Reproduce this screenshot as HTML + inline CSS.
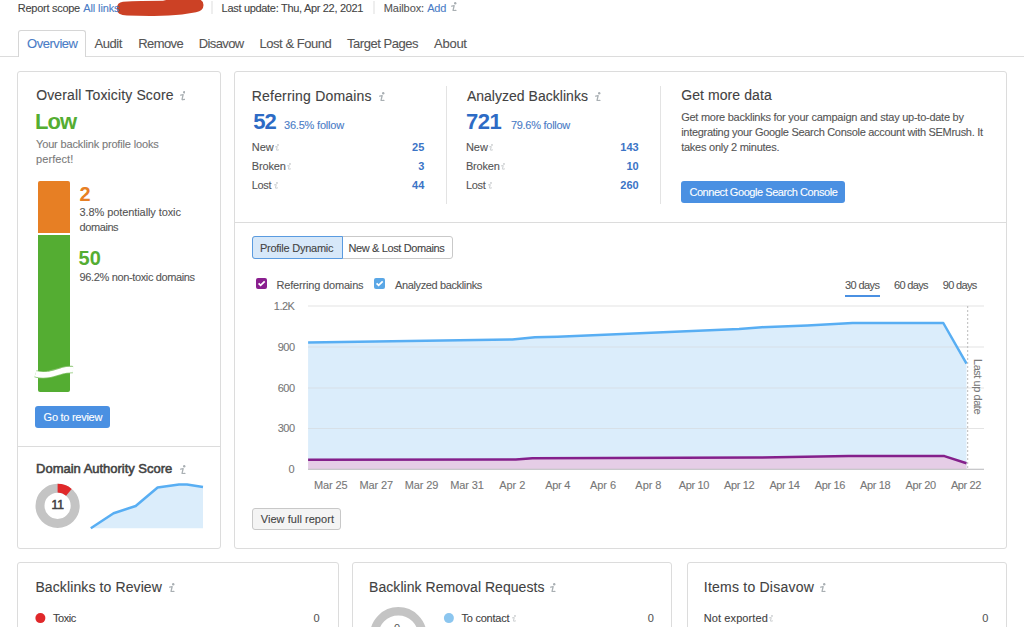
<!DOCTYPE html>
<html><head><meta charset="utf-8">
<style>
html,body{margin:0;padding:0;background:#fff;width:1024px;height:627px;overflow:hidden;position:relative;font-family:"Liberation Sans",sans-serif;}
.t{position:absolute;white-space:nowrap;}
.r{-webkit-text-stroke:0.1px currentColor;}
.a{position:absolute;box-sizing:border-box;}
.card{position:absolute;box-sizing:border-box;border:1px solid #dcdcdc;border-radius:3px;background:#fff;}
.ii{position:absolute;font-family:"Liberation Serif",serif;font-style:italic;color:#b4b8bb;font-size:13px;line-height:13px;}
.ln{position:absolute;background:#e3e3e3;}
</style></head><body>
<!-- top bar -->
<svg class="a" style="left:0;top:0" width="1024" height="70">
<path d="M123 1.8 Q140 0.9 163 0.8 L170 -1 L197 -1 Q203.5 -0.5 203.5 5 Q203.5 10.8 196 12.2 L182 14.6 Q168 16.2 150 16 L127 15.6 Q116.8 15 116.8 9 Q116.8 2.4 123 1.8 Z" fill="#cc4125"/>
<rect x="211.5" y="1" width="1" height="13" fill="#dedede"/>
<rect x="373.5" y="1" width="1" height="13" fill="#dedede"/>
</svg>
<!-- tabs -->
<div class="ln" style="left:0;top:56px;width:1024px;height:1px;background:#dcdcdc"></div>
<div class="a" style="left:18px;top:30px;width:68px;height:27px;border:1px solid #d6d6d6;border-bottom:none;border-radius:3px 3px 0 0;background:#fff"></div>

<!-- card 1 -->
<div class="card" style="left:17px;top:71px;width:204px;height:478px"></div>
<div class="a" style="left:38px;top:181px;width:32px;height:52px;background:#e77f24;border-radius:2px 2px 0 0"></div>
<div class="a" style="left:38px;top:235px;width:32px;height:157px;background:#54ad32;border-radius:0 0 2px 2px"></div>
<svg class="a" style="left:30px;top:360px" width="50" height="24">
<path d="M5.5 13.8 Q12 15.8 20 14.2 Q28 12.2 32 10.8 Q37 9.4 43 9.6" fill="none" stroke="#86c46c" stroke-width="7.4"/>
<path d="M5.5 13.8 Q12 15.8 20 14.2 Q28 12.2 32 10.8 Q37 9.4 43 9.6" fill="none" stroke="#fff" stroke-width="5.6"/>
</svg>
<div class="a" style="left:35px;top:406px;width:75px;height:22px;background:#4a90e2;border-radius:3px"></div>
<div class="ln" style="left:18px;top:446px;width:202px;height:1px;background:#dcdcdc"></div>
<svg class="a" style="left:0;top:440px" width="220" height="100">
<circle cx="57.6" cy="65.8" r="17.6" fill="none" stroke="#c4c4c4" stroke-width="9"/>
<path d="M57.6 43.8 A22 22 0 0 1 71.7 48.9 L66.1 55.7 A13.2 13.2 0 0 0 57.6 52.6 Z" fill="#e0282a"/>
<path d="M90.8 88.3 L113.6 73.2 L135.7 66 L157.6 47.5 L179 44.5 L187 44.5 L203 47 L203 88.3 Z" fill="#dbedfb"/>
<path d="M90.8 88.3 L113.6 73.2 L135.7 66 L157.6 47.5 L179 44.5 L187 44.5 L203 47" fill="none" stroke="#58aef3" stroke-width="2.5" stroke-linejoin="round"/>
</svg>

<!-- card 2 -->
<div class="card" style="left:234px;top:71px;width:773px;height:478px"></div>
<div class="ln" style="left:446px;top:86px;width:1px;height:118px"></div>
<div class="ln" style="left:660px;top:86px;width:1px;height:118px"></div>
<div class="ln" style="left:235px;top:222px;width:771px;height:1px;background:#dcdcdc"></div>
<div class="a" style="left:681px;top:181px;width:164px;height:22px;background:#4a90e2;border-radius:3px"></div>
<!-- segmented -->
<div class="a" style="left:252px;top:236px;width:201px;height:23px;border:1px solid #c9c9c9;border-radius:3px;background:#fff"></div>
<div class="a" style="left:252px;top:236px;width:91px;height:23px;border:1px solid #5a9be0;border-radius:3px 0 0 3px;background:#d7e8f9"></div>
<!-- checkboxes -->
<svg class="a" style="left:250px;top:272px" width="150" height="22">
<rect x="6" y="6" width="11" height="11" rx="2" fill="#8a1f8f"/>
<path d="M8.6 11.4 L10.6 13.3 L14.7 9.4" fill="none" stroke="#fff" stroke-width="1.8"/>
<rect x="124" y="6" width="11" height="11" rx="2" fill="#5aa7e6"/>
<path d="M126.6 11.4 L128.6 13.3 L132.7 9.4" fill="none" stroke="#fff" stroke-width="1.8"/>
</svg>
<div class="a" style="left:845px;top:295px;width:35px;height:2px;background:#4a90e2"></div>
<!-- chart -->
<svg class="a" style="left:0;top:0" width="1024" height="627">
<g fill="#e4e4e4">
<rect x="308" y="305.5" width="676" height="1"/>
<rect x="308" y="346.5" width="676" height="1"/>
<rect x="308" y="387.5" width="676" height="1"/>
<rect x="308" y="428" width="676" height="1"/>
</g>
<path d="M308.1 342.4 L512.3 339.5 L535 337.2 L557.6 336.7 L739.1 329.1 L761.8 327.2 L807.2 325.6 L852.5 323.1 L943.3 323 L966.5 363.7 L966.5 469 L308.1 469 Z" fill="#dbedfb"/>
<path d="M308.1 459.7 L515.8 459.5 L532.4 458.3 L756.5 457.5 L848.7 456.1 L944.4 456.1 L966.5 463.2 L966.5 469 L308.1 469 Z" fill="#e5cde6"/>
<g fill="#d4d4d4">
<rect x="308" y="346.5" width="659" height="1" opacity=".5"/>
<rect x="308" y="387.5" width="659" height="1" opacity=".5"/>
<rect x="308" y="428" width="659" height="1" opacity=".5"/>
</g>
<path d="M308.1 342.4 L512.3 339.5 L535 337.2 L557.6 336.7 L739.1 329.1 L761.8 327.2 L807.2 325.6 L852.5 323.1 L943.3 323 L966.5 363.7" fill="none" stroke="#58aef3" stroke-width="2.5" stroke-linejoin="round"/>
<path d="M308.1 459.7 L515.8 459.5 L532.4 458.3 L756.5 457.5 L848.7 456.1 L944.4 456.1 L966.5 463.2" fill="none" stroke="#84208b" stroke-width="2.5" stroke-linejoin="round"/>
<rect x="308" y="468.7" width="676" height="1.2" fill="#c2c2c6"/>
<line x1="967.7" y1="306" x2="967.7" y2="469" stroke="#bbb" stroke-width="1" stroke-dasharray="2,2"/>
</svg>
<div class="a" style="left:252px;top:508px;width:89px;height:22px;border:1px solid #c8c8c8;border-radius:3px;background:#f4f4f4"></div>

<!-- bottom cards -->
<div class="card" style="left:17px;top:562px;width:322px;height:80px"></div>
<div class="card" style="left:352px;top:562px;width:320px;height:80px"></div>
<div class="card" style="left:687px;top:562px;width:320px;height:80px"></div>
<svg class="a" style="left:0;top:560px" width="1024" height="67">
<circle cx="40.4" cy="58.1" r="5" fill="#e0282a"/>
<circle cx="448.9" cy="58.1" r="5" fill="#8cc6ef"/>
<circle cx="398.3" cy="75.4" r="24.1" fill="none" stroke="#c4c4c4" stroke-width="8.4"/>
</svg>
<div class="t" style="left:394px;top:623px;font-size:11px;line-height:11px;color:#555;">0</div>
<div class="t r" id="t0" style="left:17.8px;top:2.7px;font-size:11px;line-height:11px;color:#444;letter-spacing:-0.273px;">Report scope</div>
<div class="t r" id="t1" style="left:83.3px;top:2.7px;font-size:11px;line-height:11px;color:#4a7cc6;letter-spacing:-0.125px;">All links</div>
<div class="t r" id="t2" style="left:221.6px;top:2.7px;font-size:11px;line-height:11px;color:#444;letter-spacing:-0.310px;">Last update: Thu, Apr 22, 2021</div>
<div class="t r" id="t3" style="left:383.8px;top:2.7px;font-size:11px;line-height:11px;color:#555;letter-spacing:-0.086px;">Mailbox:</div>
<div class="t r" id="t4" style="left:427.2px;top:2.7px;font-size:11px;line-height:11px;color:#4a7cc6;letter-spacing:-0.200px;">Add</div>
<div class="t r" id="t5" style="left:27.0px;top:36.5px;font-size:13px;line-height:13px;color:#4a7cc6;letter-spacing:-0.457px;">Overview</div>
<div class="t r" id="t6" style="left:94.6px;top:36.5px;font-size:13px;line-height:13px;color:#555;letter-spacing:-0.450px;">Audit</div>
<div class="t r" id="t7" style="left:138.3px;top:36.5px;font-size:13px;line-height:13px;color:#555;letter-spacing:-0.600px;">Remove</div>
<div class="t r" id="t8" style="left:198.7px;top:36.5px;font-size:13px;line-height:13px;color:#555;letter-spacing:-0.600px;">Disavow</div>
<div class="t r" id="t9" style="left:259.5px;top:36.5px;font-size:13px;line-height:13px;color:#555;letter-spacing:-0.455px;">Lost &amp; Found</div>
<div class="t r" id="t10" style="left:347.0px;top:36.5px;font-size:13px;line-height:13px;color:#555;letter-spacing:-0.455px;">Target Pages</div>
<div class="t r" id="t11" style="left:434.0px;top:36.5px;font-size:13px;line-height:13px;color:#555;letter-spacing:-0.250px;">About</div>
<div class="t r" id="t12" style="left:36.2px;top:88.2px;font-size:14px;line-height:14px;color:#424242;letter-spacing:0.143px;">Overall Toxicity Score</div>
<div class="t" id="t13" style="left:35.0px;top:110.9px;font-size:22px;line-height:22px;color:#54ad32;font-weight:700;letter-spacing:-1.000px;">Low</div>
<div class="t r" id="t14" style="left:36.0px;top:139.2px;font-size:11px;line-height:11px;color:#7a7a7a;letter-spacing:-0.154px;">Your backlink profile looks</div>
<div class="t r" id="t15" style="left:36.0px;top:153.8px;font-size:11px;line-height:11px;color:#7a7a7a;letter-spacing:0.086px;">perfect!</div>
<div class="t" id="t16" style="left:79.6px;top:183.6px;font-size:20px;line-height:20px;color:#e77f24;font-weight:700;">2</div>
<div class="t r" id="t17" style="left:79.6px;top:206.9px;font-size:11px;line-height:11px;color:#555;letter-spacing:-0.095px;">3.8% potentially toxic</div>
<div class="t r" id="t18" style="left:79.6px;top:222.2px;font-size:11px;line-height:11px;color:#555;letter-spacing:-0.433px;">domains</div>
<div class="t" id="t19" style="left:78.6px;top:248.4px;font-size:20px;line-height:20px;color:#54ad32;font-weight:700;">50</div>
<div class="t r" id="t20" style="left:79.6px;top:271.7px;font-size:11px;line-height:11px;color:#555;letter-spacing:-0.364px;">96.2% non-toxic domains</div>
<div class="t r" id="t21" style="left:43.6px;top:412.3px;font-size:11px;line-height:11px;color:#fff;letter-spacing:-0.273px;">Go to review</div>
<div class="t" id="t22" style="left:36.1px;top:462.2px;font-size:13px;line-height:13px;color:#424242;-webkit-text-stroke:0.55px currentColor;letter-spacing:-0.019px;">Domain Authority Score</div>
<div class="t" id="t23" style="left:-142.4px;width:400px;text-align:center;top:499.3px;font-size:12px;line-height:12px;color:#424242;-webkit-text-stroke:0.55px currentColor;">11</div>
<div class="t r" id="t24" style="left:251.8px;top:88.5px;font-size:14px;line-height:14px;color:#424242;letter-spacing:0.188px;">Referring Domains</div>
<div class="t" id="t25" style="left:253.3px;top:110.6px;font-size:22px;line-height:22px;color:#2d6bc5;font-weight:700;letter-spacing:-1.000px;">52</div>
<div class="t r" id="t26" style="left:284.0px;top:119.8px;font-size:11px;line-height:11px;color:#4a7cc6;letter-spacing:-0.200px;">36.5% follow</div>
<div class="t r" id="t27" style="left:251.8px;top:141.7px;font-size:11px;line-height:11px;color:#555;">New</div>
<div class="t r" id="t28" style="left:251.8px;top:160.8px;font-size:11px;line-height:11px;color:#555;letter-spacing:-0.160px;">Broken</div>
<div class="t r" id="t29" style="left:251.8px;top:180.0px;font-size:11px;line-height:11px;color:#555;letter-spacing:-0.333px;">Lost</div>
<div class="t" id="t30" style="left:24.3px;width:400px;text-align:right;top:141.7px;font-size:11px;line-height:11px;color:#3b74c6;font-weight:700;">25</div>
<div class="t" id="t31" style="left:24.3px;width:400px;text-align:right;top:160.8px;font-size:11px;line-height:11px;color:#3b74c6;font-weight:700;">3</div>
<div class="t" id="t32" style="left:24.3px;width:400px;text-align:right;top:180.0px;font-size:11px;line-height:11px;color:#3b74c6;font-weight:700;">44</div>
<div class="t r" id="t33" style="left:466.9px;top:88.5px;font-size:14px;line-height:14px;color:#424242;letter-spacing:0.024px;">Analyzed Backlinks</div>
<div class="t" id="t34" style="left:466.0px;top:110.6px;font-size:22px;line-height:22px;color:#2d6bc5;font-weight:700;letter-spacing:-0.500px;">721</div>
<div class="t r" id="t35" style="left:510.9px;top:119.8px;font-size:11px;line-height:11px;color:#4a7cc6;letter-spacing:-0.273px;">79.6% follow</div>
<div class="t r" id="t36" style="left:465.9px;top:141.7px;font-size:11px;line-height:11px;color:#555;">New</div>
<div class="t r" id="t37" style="left:465.9px;top:160.8px;font-size:11px;line-height:11px;color:#555;letter-spacing:-0.160px;">Broken</div>
<div class="t r" id="t38" style="left:465.9px;top:180.0px;font-size:11px;line-height:11px;color:#555;letter-spacing:-0.333px;">Lost</div>
<div class="t" id="t39" style="left:238.7px;width:400px;text-align:right;top:141.7px;font-size:11px;line-height:11px;color:#3b74c6;font-weight:700;">143</div>
<div class="t" id="t40" style="left:238.7px;width:400px;text-align:right;top:160.8px;font-size:11px;line-height:11px;color:#3b74c6;font-weight:700;">10</div>
<div class="t" id="t41" style="left:238.7px;width:400px;text-align:right;top:180.0px;font-size:11px;line-height:11px;color:#3b74c6;font-weight:700;">260</div>
<div class="t r" id="t42" style="left:681.2px;top:88.4px;font-size:14px;line-height:14px;color:#424242;letter-spacing:0.083px;">Get more data</div>
<div class="t r" id="t43" style="left:681.2px;top:111.8px;font-size:11px;line-height:11px;color:#555;letter-spacing:-0.259px;">Get more backlinks for your campaign and stay up-to-date by</div>
<div class="t r" id="t44" style="left:681.2px;top:127.3px;font-size:11px;line-height:11px;color:#555;letter-spacing:-0.300px;">integrating your Google Search Console account with SEMrush. It</div>
<div class="t r" id="t45" style="left:681.2px;top:141.9px;font-size:11px;line-height:11px;color:#555;letter-spacing:-0.250px;">takes only 2 minutes.</div>
<div class="t r" id="t46" style="left:689.4px;top:187.0px;font-size:11px;line-height:11px;color:#fff;letter-spacing:-0.443px;">Connect Google Search Console</div>
<div class="t r" id="t47" style="left:259.9px;top:242.5px;font-size:11px;line-height:11px;color:#444;letter-spacing:-0.243px;">Profile Dynamic</div>
<div class="t r" id="t48" style="left:348.5px;top:242.5px;font-size:11px;line-height:11px;color:#444;letter-spacing:-0.376px;">New &amp; Lost Domains</div>
<div class="t r" id="t49" style="left:276.5px;top:279.6px;font-size:11px;line-height:11px;color:#555;letter-spacing:-0.175px;">Referring domains</div>
<div class="t r" id="t50" style="left:395.1px;top:279.6px;font-size:11px;line-height:11px;color:#555;letter-spacing:-0.376px;">Analyzed backlinks</div>
<div class="t r" id="t51" style="left:845.0px;top:279.6px;font-size:11px;line-height:11px;color:#555;letter-spacing:-0.600px;">30 days</div>
<div class="t r" id="t52" style="left:894.0px;top:279.6px;font-size:11px;line-height:11px;color:#555;letter-spacing:-0.667px;">60 days</div>
<div class="t r" id="t53" style="left:942.8px;top:279.6px;font-size:11px;line-height:11px;color:#555;letter-spacing:-0.667px;">90 days</div>
<div class="t r" id="t54" style="left:-105.5px;width:400px;text-align:right;top:300.7px;font-size:11px;line-height:11px;color:#777;letter-spacing:-0.467px;">1.2K</div>
<div class="t r" id="t55" style="left:-105.5px;width:400px;text-align:right;top:341.9px;font-size:11px;line-height:11px;color:#777;letter-spacing:-0.500px;">900</div>
<div class="t r" id="t56" style="left:-105.5px;width:400px;text-align:right;top:382.8px;font-size:11px;line-height:11px;color:#777;letter-spacing:-0.500px;">600</div>
<div class="t r" id="t57" style="left:-105.5px;width:400px;text-align:right;top:423.3px;font-size:11px;line-height:11px;color:#777;letter-spacing:-0.500px;">300</div>
<div class="t r" id="t58" style="left:-105.5px;width:400px;text-align:right;top:464.2px;font-size:11px;line-height:11px;color:#777;">0</div>
<div class="t r" id="t59" style="left:130.8px;width:400px;text-align:center;top:479.8px;font-size:11px;line-height:11px;color:#777;letter-spacing:-0.120px;">Mar 25</div>
<div class="t r" id="t60" style="left:176.2px;width:400px;text-align:center;top:479.8px;font-size:11px;line-height:11px;color:#777;letter-spacing:-0.120px;">Mar 27</div>
<div class="t r" id="t61" style="left:221.5px;width:400px;text-align:center;top:479.8px;font-size:11px;line-height:11px;color:#777;letter-spacing:-0.120px;">Mar 29</div>
<div class="t r" id="t62" style="left:266.9px;width:400px;text-align:center;top:479.8px;font-size:11px;line-height:11px;color:#777;letter-spacing:-0.120px;">Mar 31</div>
<div class="t r" id="t63" style="left:312.3px;width:400px;text-align:center;top:479.8px;font-size:11px;line-height:11px;color:#777;letter-spacing:-0.050px;">Apr 2</div>
<div class="t r" id="t64" style="left:357.6px;width:400px;text-align:center;top:479.8px;font-size:11px;line-height:11px;color:#777;letter-spacing:-0.300px;">Apr 4</div>
<div class="t r" id="t65" style="left:403.0px;width:400px;text-align:center;top:479.8px;font-size:11px;line-height:11px;color:#777;letter-spacing:-0.050px;">Apr 6</div>
<div class="t r" id="t66" style="left:448.4px;width:400px;text-align:center;top:479.8px;font-size:11px;line-height:11px;color:#777;letter-spacing:-0.050px;">Apr 8</div>
<div class="t r" id="t67" style="left:493.8px;width:400px;text-align:center;top:479.8px;font-size:11px;line-height:11px;color:#777;letter-spacing:-0.360px;">Apr 10</div>
<div class="t r" id="t68" style="left:539.1px;width:400px;text-align:center;top:479.8px;font-size:11px;line-height:11px;color:#777;letter-spacing:-0.360px;">Apr 12</div>
<div class="t r" id="t69" style="left:584.5px;width:400px;text-align:center;top:479.8px;font-size:11px;line-height:11px;color:#777;letter-spacing:-0.360px;">Apr 14</div>
<div class="t r" id="t70" style="left:629.9px;width:400px;text-align:center;top:479.8px;font-size:11px;line-height:11px;color:#777;letter-spacing:-0.360px;">Apr 16</div>
<div class="t r" id="t71" style="left:675.2px;width:400px;text-align:center;top:479.8px;font-size:11px;line-height:11px;color:#777;letter-spacing:-0.360px;">Apr 18</div>
<div class="t r" id="t72" style="left:720.6px;width:400px;text-align:center;top:479.8px;font-size:11px;line-height:11px;color:#777;letter-spacing:-0.360px;">Apr 20</div>
<div class="t r" id="t73" style="left:766.0px;width:400px;text-align:center;top:479.8px;font-size:11px;line-height:11px;color:#777;letter-spacing:-0.360px;">Apr 22</div>
<div class="t r" id="t74" style="left:983.0px;top:359.3px;font-size:11px;line-height:11px;color:#7a7a7a;letter-spacing:-0.455px;transform-origin:0 0;transform:rotate(90deg);">Last up date</div>
<div class="t r" id="t75" style="left:260.8px;top:513.5px;font-size:11px;line-height:11px;color:#444;letter-spacing:0.040px;">View full report</div>
<div class="t r" id="t76" style="left:35.4px;top:579.6px;font-size:14px;line-height:14px;color:#424242;letter-spacing:0.111px;">Backlinks to Review</div>
<div class="t r" id="t77" style="left:53.0px;top:612.9px;font-size:11px;line-height:11px;color:#424242;letter-spacing:-0.450px;">Toxic</div>
<div class="t r" id="t78" style="left:-80.5px;width:400px;text-align:right;top:612.9px;font-size:11px;line-height:11px;color:#555;">0</div>
<div class="t r" id="t79" style="left:369.1px;top:579.6px;font-size:14px;line-height:14px;color:#424242;letter-spacing:0.042px;">Backlink Removal Requests</div>
<div class="t r" id="t80" style="left:461.4px;top:612.9px;font-size:11px;line-height:11px;color:#424242;letter-spacing:-0.222px;">To contact</div>
<div class="t r" id="t81" style="left:253.9px;width:400px;text-align:right;top:612.9px;font-size:11px;line-height:11px;color:#555;">0</div>
<div class="t r" id="t82" style="left:703.8px;top:579.6px;font-size:14px;line-height:14px;color:#424242;letter-spacing:0.227px;">Items to Disavow</div>
<div class="t r" id="t83" style="left:703.8px;top:612.9px;font-size:11px;line-height:11px;color:#424242;letter-spacing:0.091px;">Not exported</div>
<div class="t r" id="t84" style="left:588.4px;width:400px;text-align:right;top:612.9px;font-size:11px;line-height:11px;color:#555;">0</div>
<svg class="a" style="left:451.0px;top:1.6px" width="5.95" height="9.60" viewBox="0 0 6 10"><circle cx="4.3" cy="1.3" r="1.25" fill="#a9afb3"/><path d="M0.6 4.2 L3.2 3.8 L2.1 8.4 Q1.9 9.2 2.8 9.1 L5.0 8.7" fill="none" stroke="#a9afb3" stroke-width="1.35" stroke-linejoin="round" stroke-linecap="round"/></svg>
<svg class="a" style="left:179.5px;top:91.4px" width="5.95" height="9.60" viewBox="0 0 6 10"><circle cx="4.3" cy="1.3" r="1.25" fill="#a9afb3"/><path d="M0.6 4.2 L3.2 3.8 L2.1 8.4 Q1.9 9.2 2.8 9.1 L5.0 8.7" fill="none" stroke="#a9afb3" stroke-width="1.35" stroke-linejoin="round" stroke-linecap="round"/></svg>
<svg class="a" style="left:379.4px;top:91.7px" width="5.95" height="9.60" viewBox="0 0 6 10"><circle cx="4.3" cy="1.3" r="1.25" fill="#a9afb3"/><path d="M0.6 4.2 L3.2 3.8 L2.1 8.4 Q1.9 9.2 2.8 9.1 L5.0 8.7" fill="none" stroke="#a9afb3" stroke-width="1.35" stroke-linejoin="round" stroke-linecap="round"/></svg>
<svg class="a" style="left:595.0px;top:91.7px" width="5.95" height="9.60" viewBox="0 0 6 10"><circle cx="4.3" cy="1.3" r="1.25" fill="#a9afb3"/><path d="M0.6 4.2 L3.2 3.8 L2.1 8.4 Q1.9 9.2 2.8 9.1 L5.0 8.7" fill="none" stroke="#a9afb3" stroke-width="1.35" stroke-linejoin="round" stroke-linecap="round"/></svg>
<svg class="a" style="left:180.0px;top:464.7px" width="5.95" height="9.60" viewBox="0 0 6 10"><circle cx="4.3" cy="1.3" r="1.25" fill="#a9afb3"/><path d="M0.6 4.2 L3.2 3.8 L2.1 8.4 Q1.9 9.2 2.8 9.1 L5.0 8.7" fill="none" stroke="#a9afb3" stroke-width="1.35" stroke-linejoin="round" stroke-linecap="round"/></svg>
<svg class="a" style="left:168.6px;top:582.8px" width="5.95" height="9.60" viewBox="0 0 6 10"><circle cx="4.3" cy="1.3" r="1.25" fill="#a9afb3"/><path d="M0.6 4.2 L3.2 3.8 L2.1 8.4 Q1.9 9.2 2.8 9.1 L5.0 8.7" fill="none" stroke="#a9afb3" stroke-width="1.35" stroke-linejoin="round" stroke-linecap="round"/></svg>
<svg class="a" style="left:550.4px;top:582.8px" width="5.95" height="9.60" viewBox="0 0 6 10"><circle cx="4.3" cy="1.3" r="1.25" fill="#a9afb3"/><path d="M0.6 4.2 L3.2 3.8 L2.1 8.4 Q1.9 9.2 2.8 9.1 L5.0 8.7" fill="none" stroke="#a9afb3" stroke-width="1.35" stroke-linejoin="round" stroke-linecap="round"/></svg>
<svg class="a" style="left:819.8px;top:582.8px" width="5.95" height="9.60" viewBox="0 0 6 10"><circle cx="4.3" cy="1.3" r="1.25" fill="#a9afb3"/><path d="M0.6 4.2 L3.2 3.8 L2.1 8.4 Q1.9 9.2 2.8 9.1 L5.0 8.7" fill="none" stroke="#a9afb3" stroke-width="1.35" stroke-linejoin="round" stroke-linecap="round"/></svg>
<svg class="a" style="left:275.3px;top:144.0px" width="4.22" height="6.80" viewBox="0 0 6 10"><circle cx="4.3" cy="1.3" r="1.25" fill="#c3c6c8"/><path d="M0.6 4.2 L3.2 3.8 L2.1 8.4 Q1.9 9.2 2.8 9.1 L5.0 8.7" fill="none" stroke="#c3c6c8" stroke-width="1.35" stroke-linejoin="round" stroke-linecap="round"/></svg>
<svg class="a" style="left:287.0px;top:163.1px" width="4.22" height="6.80" viewBox="0 0 6 10"><circle cx="4.3" cy="1.3" r="1.25" fill="#c3c6c8"/><path d="M0.6 4.2 L3.2 3.8 L2.1 8.4 Q1.9 9.2 2.8 9.1 L5.0 8.7" fill="none" stroke="#c3c6c8" stroke-width="1.35" stroke-linejoin="round" stroke-linecap="round"/></svg>
<svg class="a" style="left:273.5px;top:182.3px" width="4.22" height="6.80" viewBox="0 0 6 10"><circle cx="4.3" cy="1.3" r="1.25" fill="#c3c6c8"/><path d="M0.6 4.2 L3.2 3.8 L2.1 8.4 Q1.9 9.2 2.8 9.1 L5.0 8.7" fill="none" stroke="#c3c6c8" stroke-width="1.35" stroke-linejoin="round" stroke-linecap="round"/></svg>
<svg class="a" style="left:489.4px;top:144.0px" width="4.22" height="6.80" viewBox="0 0 6 10"><circle cx="4.3" cy="1.3" r="1.25" fill="#c3c6c8"/><path d="M0.6 4.2 L3.2 3.8 L2.1 8.4 Q1.9 9.2 2.8 9.1 L5.0 8.7" fill="none" stroke="#c3c6c8" stroke-width="1.35" stroke-linejoin="round" stroke-linecap="round"/></svg>
<svg class="a" style="left:501.2px;top:163.1px" width="4.22" height="6.80" viewBox="0 0 6 10"><circle cx="4.3" cy="1.3" r="1.25" fill="#c3c6c8"/><path d="M0.6 4.2 L3.2 3.8 L2.1 8.4 Q1.9 9.2 2.8 9.1 L5.0 8.7" fill="none" stroke="#c3c6c8" stroke-width="1.35" stroke-linejoin="round" stroke-linecap="round"/></svg>
<svg class="a" style="left:488.3px;top:182.3px" width="4.22" height="6.80" viewBox="0 0 6 10"><circle cx="4.3" cy="1.3" r="1.25" fill="#c3c6c8"/><path d="M0.6 4.2 L3.2 3.8 L2.1 8.4 Q1.9 9.2 2.8 9.1 L5.0 8.7" fill="none" stroke="#c3c6c8" stroke-width="1.35" stroke-linejoin="round" stroke-linecap="round"/></svg>
<svg class="a" style="left:512.2px;top:615.1px" width="4.22" height="6.80" viewBox="0 0 6 10"><circle cx="4.3" cy="1.3" r="1.25" fill="#c3c6c8"/><path d="M0.6 4.2 L3.2 3.8 L2.1 8.4 Q1.9 9.2 2.8 9.1 L5.0 8.7" fill="none" stroke="#c3c6c8" stroke-width="1.35" stroke-linejoin="round" stroke-linecap="round"/></svg>
<svg class="a" style="left:769.3px;top:615.1px" width="4.22" height="6.80" viewBox="0 0 6 10"><circle cx="4.3" cy="1.3" r="1.25" fill="#c3c6c8"/><path d="M0.6 4.2 L3.2 3.8 L2.1 8.4 Q1.9 9.2 2.8 9.1 L5.0 8.7" fill="none" stroke="#c3c6c8" stroke-width="1.35" stroke-linejoin="round" stroke-linecap="round"/></svg>
</body></html>
